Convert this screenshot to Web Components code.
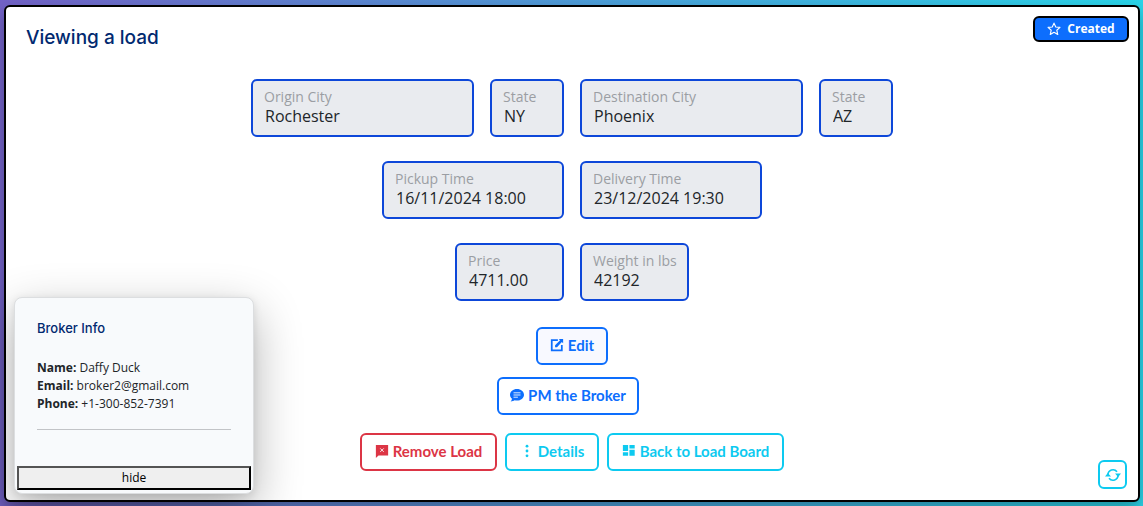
<!DOCTYPE html>
<html lang="en">
<head>
<meta charset="utf-8">
<title>Viewing a load</title>
<style>
  html, body { margin: 0; min-height: 100%; }
  body {
    min-height: 100vh;
    box-sizing: border-box;
    display: flex;
    padding: 5px 3px 4px 4px;
    background: linear-gradient(to right, #7262c6, #2ad4e8);
    font-family: "Open Sans", "Noto Sans", sans-serif;
    color: #212529;
  }
</style>
</head>
<body>
<load-page></load-page>

<script>
const ICONS = {
  star: '<path fill="none" stroke="currentColor" stroke-width="1.3" stroke-linejoin="round" d="M8 1.3l2 4.4 4.8.5-3.600 3.200 1.100 4.900L8 11.800l-4.300 2.500 1.100-4.900L1.200 6.200 6 5.700z"/>',
  edit: '<path fill="none" stroke="currentColor" stroke-width="2" d="M9 2.500H2v11.500h11.500V8"/><path fill="currentColor" d="M10 1h5v5l-1.500-1.500L8 10.500H5.800V8.200L11.500 2.500z"/>',
  chat: '<path fill="currentColor" d="M8 1C3.600 1 0 4 0 7.700c0 1.900.9 3.500 2.300 4.700-.2 1.200-.8 2.200-1.500 2.900 2 0 3.400-.6 4.500-1.300.9.200 1.800.4 2.700.4 4.400 0 8-3 8-6.700S12.400 1 8 1z"/><path stroke="#fff" stroke-width="1" d="M4 5.500h8M4 8h8M4 10.500h5"/>',
  remove: '<path fill="currentColor" d="M1 1h14v12H4l-3 3z"/><path stroke="#fff" stroke-width="1" d="M6 5l4 4M10 5l-4 4"/>',
  dots: '<g fill="currentColor"><circle cx="8" cy="2.500" r="1.600"/><circle cx="8" cy="8" r="1.600"/><circle cx="8" cy="13.500" r="1.600"/></g>',
  board: '<path fill="currentColor" d="M1 1h6v7H1zM8.500 1h6v4h-6zM1 9.500h6v4H1zM8.500 6.500h6v7h-6z"/>',
  refresh: '<g fill="none" stroke="currentColor" stroke-width="1.600"><path d="M3 8a5 5 0 0 1 9-3.200M13 8a5 5 0 0 1-9 3.200"/></g><path fill="currentColor" d="M0 9.500l2.800-3.500 3.200 3.500zM16 6.500l-2.800 3.500L10 6.500z"/>'
};

class UiIcon extends HTMLElement {
  connectedCallback() {
    this.attachShadow({ mode: "open" }).innerHTML = `
      <style>
        :host { display: inline-flex; flex: none; width: 14px; height: 14px; }
        svg { width: 100%; height: 100%; }
      </style>
      <svg viewBox="0 0 16 16" aria-hidden="true">${ICONS[this.getAttribute("name")]}</svg>`;
  }
}
customElements.define("ui-icon", UiIcon);

class LoadField extends HTMLElement {
  connectedCallback() {
    this.attachShadow({ mode: "open" }).innerHTML = `
      <style>
        :host { display: block; box-sizing: border-box; }
        .box {
          box-sizing: border-box;
          height: 58px;
          padding: 6px 11px;
          border: 2px solid #0d47d9;
          border-radius: 6px;
          background: #e9ebef;
        }
        label { display: block; font-size: 14px; line-height: 20px; color: #9b9ea3; white-space: nowrap; }
        input {
          display: block;
          box-sizing: border-box;
          width: 100%;
          height: 18px;
          margin: 0;
          padding: 0 0 0 1px;
          border: 0;
          outline: 0;
          background: none;
          font: 16px/18px "Open Sans", "Noto Sans", sans-serif;
          color: #212529;
        }
      </style>
      <div class="box"><label for="v"></label><input id="v" readonly></div>`;
    this.shadowRoot.querySelector("label").textContent = this.getAttribute("label");
    this.shadowRoot.querySelector("input").value = this.getAttribute("value");
  }
}
customElements.define("load-field", LoadField);

class ActionButton extends HTMLElement {
  connectedCallback() {
    this.attachShadow({ mode: "open" }).innerHTML = `
      <style>
        :host { display: block; color: #0d6efd; }
        :host([tone="danger"]) { color: #dc3545; }
        :host([tone="info"]) { color: #0dcaf0; }
        button {
          box-sizing: border-box;
          display: flex;
          align-items: center;
          justify-content: center;
          gap: 4px;
          width: 100%;
          height: 38px;
          padding: 0 0 2px;
          border: 2px solid currentColor;
          border-radius: 6px;
          background: var(--button-fill, #fff);
          font: 700 15px/20px Lato, "Open Sans", sans-serif;
          color: inherit;
          white-space: nowrap;
        }
        :host([square]) button { height: 29px; padding: 0; }
        :host([square]) ui-icon { width: 16px; height: 16px; }
      </style>
      <button type="button"><ui-icon name="${this.getAttribute("icon")}"></ui-icon>${this.hasAttribute("square") ? "" : "<slot></slot>"}</button>`;
    if (this.title) this.shadowRoot.querySelector("button").setAttribute("aria-label", this.title);
  }
}
customElements.define("action-button", ActionButton);

class StatusBadge extends HTMLElement {
  connectedCallback() {
    this.attachShadow({ mode: "open" }).innerHTML = `
      <style>
        :host {
          display: flex;
          align-items: center;
          justify-content: center;
          gap: 6px;
          box-sizing: border-box;
          width: 96px;
          height: 26px;
          border: 2px solid #000;
          border-radius: 6px;
          background: #0d6efd;
          color: #fff;
          font-size: 12px;
          line-height: 18px;
          font-weight: 700;
        }
      </style>
      <ui-icon name="star"></ui-icon><slot></slot>`;
  }
}
customElements.define("status-badge", StatusBadge);

class BrokerCard extends HTMLElement {
  connectedCallback() {
    this.attachShadow({ mode: "open" }).innerHTML = `
      <style>
        :host {
          display: flex;
          flex-direction: column;
          box-sizing: border-box;
          width: 240px;
          height: 197px;
          padding: 21px 2px 3px;
          border: 1px solid #dcdee0;
          border-radius: 8px;
          background: #f8fafc;
          box-shadow: 0 16px 48px rgba(0, 0, 0, .3), 0 2px 8px rgba(0, 0, 0, .1);
        }
        .info { padding: 0 20px; }
        h2 { margin: 0 0 22px; font: 500 13px/18px Inter, sans-serif; color: #012970; }
        p { margin: 0; font-size: 12px; line-height: 18px; }
        hr { margin: 16px 0 0; border: 0; border-top: 1px solid #c2c4c7; }
        button {
          margin: auto 0 0;
          height: 24px;
          padding: 0;
          border: 2px outset #000;
          background: #efefef;
          font: 12px/18px "Open Sans", "Noto Sans", sans-serif;
          color: #000;
        }
      </style>
      <div class="info">
        <h2>Broker Info</h2>
        <p><b>Name:</b> Daffy Duck</p>
        <p><b>Email:</b> broker2@gmail.com</p>
        <p><b>Phone:</b> +1-300-852-7391</p>
        <hr>
      </div>
      <button type="button">hide</button>`;
  }
}
customElements.define("broker-card", BrokerCard);

class LoadPage extends HTMLElement {
  connectedCallback() {
    this.attachShadow({ mode: "open" }).innerHTML = `
      <style>
        :host {
          position: relative;
          flex: 1;
          display: block;
          box-sizing: border-box;
          border: 2px solid #000;
          border-radius: 6px;
          background: #fff;
          box-shadow: 0 8px 16px rgba(0, 0, 0, .3);
        }
        header {
          display: flex;
          justify-content: space-between;
          align-items: flex-start;
          height: 72px;
          box-sizing: border-box;
          padding: 9px 9px 0 20px;
        }
        h1 { margin: 10px 0 0; font: 500 19px/24px Inter, sans-serif; color: #012970; }
        .fields { display: grid; gap: 24px; }
        .row { display: flex; justify-content: center; gap: 16px; }
        .city { width: 223px; }
        .state { width: 74px; }
        .time { width: 182px; }
        .number { width: 109px; }
        .actions { display: grid; justify-content: center; justify-items: center; gap: 12px; margin-top: 26px; }
        .edit { width: 72px; --button-fill: #f8f9ff; }
        .message { width: 142px; margin-right: 8px; }
        .last { display: flex; gap: 8px; margin-top: 6px; }
        .remove { width: 137px; }
        .details { width: 94px; }
        .back { width: 177px; }
        broker-card { position: absolute; left: 8px; bottom: 6px; }
        .refresh { position: absolute; right: 11px; bottom: 11px; width: 29px; }
      </style>
      <header><h1>Viewing a load</h1><status-badge>Created</status-badge></header>
      <main>
        <div class="fields">
          <div class="row">
            <load-field class="city" label="Origin City" value="Rochester"></load-field>
            <load-field class="state" label="State" value="NY"></load-field>
            <load-field class="city" label="Destination City" value="Phoenix"></load-field>
            <load-field class="state" label="State" value="AZ"></load-field>
          </div>
          <div class="row">
            <load-field class="time" label="Pickup Time" value="16/11/2024 18:00"></load-field>
            <load-field class="time" label="Delivery Time" value="23/12/2024 19:30"></load-field>
          </div>
          <div class="row">
            <load-field class="number" label="Price" value="4711.00"></load-field>
            <load-field class="number" label="Weight in lbs" value="42192"></load-field>
          </div>
        </div>
        <div class="actions">
          <action-button class="edit" icon="edit">Edit</action-button>
          <action-button class="message" icon="chat">PM the Broker</action-button>
          <div class="last">
            <action-button class="remove" tone="danger" icon="remove">Remove Load</action-button>
            <action-button class="details" tone="info" icon="dots">Details</action-button>
            <action-button class="back" tone="info" icon="board">Back to Load Board</action-button>
          </div>
        </div>
      </main>
      <broker-card></broker-card>
      <action-button class="refresh" tone="info" icon="refresh" square title="Refresh"></action-button>`;
  }
}
customElements.define("load-page", LoadPage);
</script>
</body>
</html>
